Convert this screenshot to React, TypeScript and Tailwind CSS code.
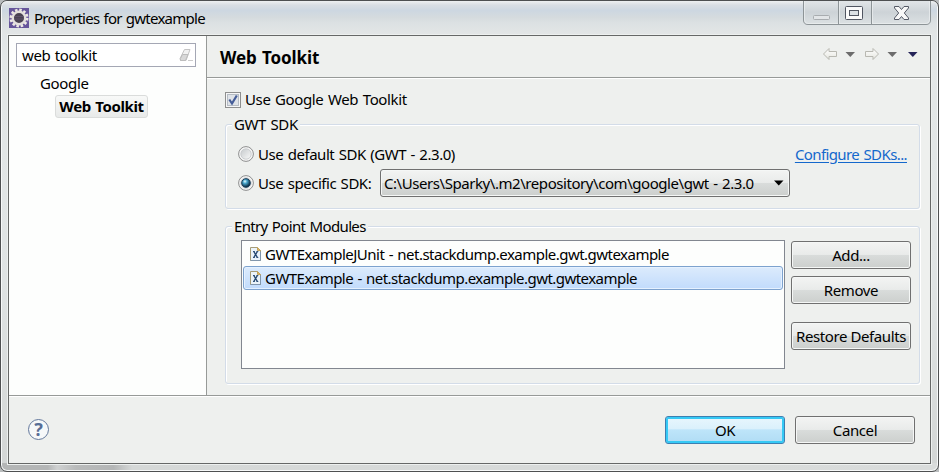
import type { ReactNode } from "react";

function Group({ title, className, titleClass = "", children }: { title: string; className: string; titleClass?: string; children: ReactNode }) {
  return (
    <fieldset className={`relative ml-[18px] w-[695px] rounded-[3px] border border-[#d3dce8] shadow-[inset_1px_1px_0_#fff,1px_1px_0_#fff] ${className}`}>
      <span className={`absolute -top-[11px] left-[6px] bg-[#eef0ee] pl-[2px] pr-[2px] leading-[20px] ${titleClass}`}>{title}</span>
      {children}
    </fieldset>
  );
}

function Button({ children, className = "" }: { children: ReactNode; className?: string }) {
  return (
    <button
      className={`flex h-7 w-[120px] shrink-0 items-center justify-center rounded-[3px] border ${className || "border-[#707070] bg-[linear-gradient(#f3f4f3_0%,#e9ebea_48%,#d9dcdb_50%,#cccfcd_100%)] shadow-[inset_0_0_0_1px_#f5f7f6]"}`}
    >
      {children}
    </button>
  );
}

function Radio({ checked = false }: { checked?: boolean }) {
  return (
    <svg width="16" height="16" viewBox="0 0 16 16" className="shrink-0">
      <defs>
        <radialGradient id="ball" cx="38%" cy="32%" r="65%">
          <stop offset="0" stopColor="#e5fbff" />
          <stop offset=".35" stopColor="#4ba9cf" />
          <stop offset="1" stopColor="#08283f" />
        </radialGradient>
        <linearGradient id="dish" x1="0" y1="0" x2="1" y2="1">
          <stop offset="0" stopColor="#c6cacc" />
          <stop offset="1" stopColor="#fafafa" />
        </linearGradient>
      </defs>
      <circle cx="8" cy="8" r="7.4" fill="#f6f6f6" stroke="#8e8f8f" />
      <circle cx="8" cy="8" r="5.2" fill="url(#dish)" stroke="#c3c7c9" strokeWidth=".8" />
      {checked && <circle cx="8" cy="8" r="4.3" fill="url(#ball)" stroke="#183c58" />}
    </svg>
  );
}

function FileIcon() {
  return (
    <svg width="12" height="14" viewBox="0 0 12 14" className="shrink-0">
      <path d="M.5.5h7l3 3v10H.5z" fill="#eaf3fa" stroke="#a69c78" />
      <path d="M7.5.5v3h3z" fill="#d9b668" stroke="#c5a45a" />
      <path d="M.5 13.5h10v-9" fill="none" stroke="#8196ac" />
      <path d="M3 4.5h1.8M6.5 4.5h1.8M3 10.5h1.8M6.5 10.5h1.8" stroke="#34557c" />
      <path d="M3.8 4.5l3.6 6M7.4 4.5l-3.6 6" stroke="#254870" strokeWidth="1.4" />
    </svg>
  );
}

function Logo() {
  return (
    <svg width="20" height="20" viewBox="0 0 20 20" className="shrink-0">
      <rect width="20" height="20" fill="#66559a" />
      <path d="M0 6h20v8H0z" fill="#806fad" opacity=".5" />
      <circle cx="10" cy="10" r="8.1" fill="none" stroke="#eeeae5" strokeWidth="2.8" strokeDasharray="2.5 1.74" />
      <circle cx="10" cy="10" r="6.2" fill="#4a4252" stroke="#e4e0dd" strokeWidth="2.4" />
      <path d="M5.500 8.500h9M5.500 11h9" stroke="#62566e" strokeWidth=".8" />
    </svg>
  );
}

function Toolbar() {
  return (
    <svg width="98" height="16" viewBox="820 46 98 16" className="mt-[10px]">
      <defs>
        <linearGradient id="arrow" x1="0" y1="0" x2="0" y2="1">
          <stop offset="0" stopColor="#fff" />
          <stop offset="1" stopColor="#e5e6df" />
        </linearGradient>
      </defs>
      <path d="M823.5 54l5.5-5.5V51.500h7.500v5H829v3z" fill="url(#arrow)" stroke="#b8b8b1" strokeLinejoin="round" />
      <path d="M878.500 54l-5.500-5.500V51.500h-7.500v5h7.500v3z" fill="url(#arrow)" stroke="#b8b8b1" strokeLinejoin="round" />
      <path d="M845.500 52h9.500l-4.700 5z" fill="#6c6c6c" />
      <path d="M887.500 52h9.500l-4.700 5z" fill="#6c6c6c" />
      <path d="M908 52h9.500l-4.700 5z" fill="#252458" />
    </svg>
  );
}

export default function App() {
  return (
    <div className="h-[472px] w-[939px] overflow-hidden bg-[#b9bcbd] font-['Noto_Sans','Open_Sans',sans-serif] text-[15px] leading-[20px] tracking-[-0.4px] text-black [word-spacing:1px]">
      <div className="flex h-[472px] flex-col rounded-[7px] border border-[#4e5051] [background:linear-gradient(90deg,#b4b6b6_0%,#b4b6b6_5%,#cfd1d1_6%,#b9bbbb_8%,#b4b6b6_12%,#d5d8d7_14%,#d9dcdb_100%)_bottom/100%_8px_no-repeat,linear-gradient(#dce1e4,#e4e8e8_12%,#dfe3e3_60%,#d3d6d5)] px-[7px] pb-[7px] shadow-[inset_0_0_0_1px_#f7f9f9]">
        <header className="-mx-[6px] flex h-[34px] shrink-0 items-start justify-between rounded-t-[6px] bg-[linear-gradient(180deg,#eef0f1_0%,#d9dee3_12%,#cdd7e1_28%,#d5dbde_48%,#dce1e3_65%,#e3e6e6_100%)] pl-[7px]">
          <div className="flex h-[34px] items-center gap-[6px]">
            <Logo />
            <span className="-ml-px -mt-px tracking-[-0.75px]">Properties for gwtexample</span>
          </div>
          <svg width="130" height="26" viewBox="802 1 130 26" className="mr-[5px]">
            <defs>
              <linearGradient id="cap" x1="0" y1="0" x2="0" y2="1">
                <stop offset="0" stopColor="#e3e7e9" />
                <stop offset=".5" stopColor="#cdd3d7" />
                <stop offset="1" stopColor="#dce1e3" />
              </linearGradient>
            </defs>
            <path d="M803.500 0v20q0 4.500 4.500 4.500h118q4.500 0 4.500-4.500V0" fill="url(#cap)" stroke="#8d9497" />
            <path d="M804.500 1v19q0 3.500 3.500 3.500h118q3.500 0 3.500-3.500V1" fill="none" stroke="#edf0f1" opacity=".7" />
            <path d="M838.500 1v23M871.500 1v23" stroke="#8d9497" />
            <path d="M839.500 1v22M872.500 1v22" stroke="#edf0f1" opacity=".7" />
            <rect x="813.500" y="15.500" width="16" height="4" rx="1" fill="#e2e5e7" stroke="#a8acaf" />
            <rect x="845.500" y="6.500" width="17" height="13" rx="1" fill="#fafafa" stroke="#505561" />
            <rect x="849.500" y="10.500" width="9" height="5" fill="#dce1e5" stroke="#505561" />
            <path d="M894.500 6.500h4.500l2.500 3 2.500-3h4.500v1.500l-4.200 5 4.200 5v1.500H904l-2.500-3-2.500 3h-4.500V18l4.200-5-4.200-5z" fill="#f8f8f8" stroke="#555a66" strokeLinejoin="round" />
          </svg>
        </header>

        <div className="flex w-[923px] grow flex-col border border-[#666867] bg-[#eef0ee] shadow-[0_0_0_1px_#edf0ef]">
          <div className="flex h-[360px] shrink-0 border-b border-[#979a98] shadow-[0_1px_0_#fff]">
            <nav className="flex w-[198px] shrink-0 flex-col items-start border-r border-[#979a98] bg-[#fdfefd]">
              <div className="ml-[7px] mt-[7px] flex h-6 w-[180px] items-center justify-between border border-[#a4a7b4] bg-white pl-[5px] pr-[2px]">
                <span className="tracking-[-0.4px]">web toolkit</span>
                <svg width="14" height="14" viewBox="0 0 14 14" className="shrink-0">
                  <path d="M5.500 1.500h5.500L7 12.500H1.500l-.5-2z" fill="#f1f1f1" stroke="#c4c4c4" strokeLinejoin="round" />
                  <path d="M1.500 10.500l2-4H9l-2.500 6h-5z" fill="#d8d8d8" stroke="#bcbcbc" strokeLinejoin="round" />
                  <path d="M9 12.500h5" stroke="#cbcbcb" />
                </svg>
              </div>
              <span className="ml-[31px] mt-[6px] tracking-[-0.35px]">Google</span>
              <span className="ml-[46px] mt-[2px] flex h-[23px] w-[93px] items-center justify-center rounded-[3px] border border-[#dadcdb] bg-[linear-gradient(#f8f9f8,#e8eae9)] pb-px font-bold tracking-[-0.4px]">Web Toolkit</span>
            </nav>

            <main className="flex grow flex-col">
              <div className="flex h-[42px] shrink-0 justify-between border-b border-[#979a98] pl-[13px] pr-[12px] shadow-[0_1px_0_#fff]">
                <h1 className="mt-[12px] text-[17px] font-bold tracking-[-0.1px]">Web Toolkit</h1>
                <Toolbar />
              </div>

              <label className="ml-[18px] mt-[12px] flex h-5 items-center gap-[4px]">
                <svg width="16" height="16" viewBox="0 0 16 16" className="-mt-px">
                  <rect x=".5" y=".5" width="15" height="15" fill="#f6f6f6" stroke="#8e8f8f" />
                  <rect x="2.500" y="2.500" width="11" height="11" fill="#dfe3e8" stroke="#b5bcc4" />
                  <path d="M4.300 7.500l2.700 4L11.800 3.500" fill="none" stroke="#455d98" strokeWidth="2.200" />
                </svg>
                <span className="-mt-[2px] tracking-[-0.37px]">Use Google Web Toolkit</span>
              </label>

              <Group title="GWT SDK" className="mt-[14px] h-[85px] pt-[19px]">
                <div className="flex h-5 items-center pl-[12px] pr-[12px]">
                  <Radio />
                  <span className="ml-[4px] tracking-[-0.46px]">Use default SDK (GWT - 2.3.0)</span>
                  <a className="ml-auto tracking-[-0.6px] text-[#1468cc] underline underline-offset-2">Configure SDKs...</a>
                </div>
                <div className="mt-[5px] flex h-7 items-center pl-[12px]">
                  <Radio checked />
                  <span className="ml-[4px] w-[122px] tracking-[-0.46px]">Use specific SDK:</span>
                  <div className="flex h-7 w-[410px] items-center justify-between rounded-[3px] border border-[#707070] bg-[linear-gradient(#f3f4f3_0%,#e9ebea_48%,#d9dcdb_50%,#cccfcd_100%)] pl-[3px] pr-[5px] shadow-[inset_0_0_0_1px_#f5f7f6]">
                    <span className="tracking-[-0.44px]">C:\Users\Sparky\.m2\repository\com\google\gwt - 2.3.0</span>
                    <svg width="10" height="6" viewBox="0 0 10 6"><path d="M0 .5h9.500L4.750 5.500z" /></svg>
                  </div>
                </div>
              </Group>

              <Group title="Entry Point Modules" titleClass="tracking-[-0.65px]" className="mt-[17px] flex h-[158px] gap-[6px] pl-[15px] pt-[13px]">
                <div className="h-[129px] w-[544px] border border-[#828790] bg-[#fdfefd] p-px">
                  <div className="flex h-6 items-center gap-[3px] pl-[7px]">
                    <FileIcon />
                    <span className="tracking-[-0.52px]">GWTExampleJUnit - net.stackdump.example.gwt.gwtexample</span>
                  </div>
                  <div className="flex h-6 items-center gap-[3px] rounded-[3px] border border-[#7da2ce] bg-[linear-gradient(#dcebfc,#c1dbfc)] pl-[6px] shadow-[inset_0_0_0_1px_#e5f1ff]">
                    <FileIcon />
                    <span className="tracking-[-0.54px]">GWTExample - net.stackdump.example.gwt.gwtexample</span>
                  </div>
                </div>
                <div className="flex flex-col pt-px">
                  <Button>Add...</Button>
                  <div className="mt-[7px]"><Button>Remove</Button></div>
                  <div className="mt-[18px]"><Button>Restore Defaults</Button></div>
                </div>
              </Group>
            </main>
          </div>

          <footer className="flex grow items-center gap-[10px] pl-[19px] pr-[15px]">
            <div className="mr-auto flex size-[21px] items-center justify-center rounded-full border-[1.5px] border-[#63789c] bg-[#f6f8f9] pb-px text-[18px] font-bold tracking-normal text-[#586e96]">?</div>
            <Button className="border-[#3c7fb1] bg-[linear-gradient(#e8f6fd_0%,#daf0fc_46%,#bee5fa_49%,#b0dcf4_100%)] shadow-[inset_0_0_0_2px_#35c9f5]">OK</Button>
            <Button>Cancel</Button>
          </footer>
        </div>
      </div>
    </div>
  );
}
